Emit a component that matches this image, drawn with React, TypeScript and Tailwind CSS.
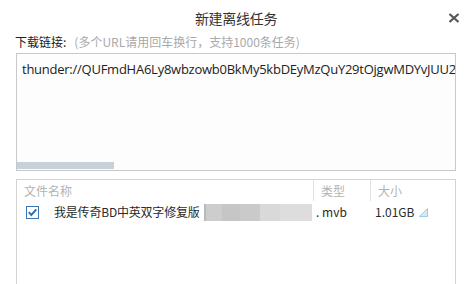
import React from "react";

const cjk = "font-['Noto_Sans_CJK_SC',sans-serif]";

function CloseIcon() {
  return (
    <svg width="12" height="10" viewBox="0 0 12 10" className="block">
      <path d="M1.5 1 L10.5 9 M10.5 1 L1.5 9" stroke="#555" strokeWidth="2.2" strokeLinecap="butt" />
    </svg>
  );
}

function Check() {
  return (
    <div className="w-[13px] h-[13px] border border-[#3a78b5] bg-white flex items-center justify-center">
      <svg width="11" height="11" viewBox="0 0 11 11" className="block">
        <path d="M1.8 5.2 L4.3 8 L9.3 2.4" stroke="#2f6fae" strokeWidth="1.9" fill="none" />
      </svg>
    </div>
  );
}

function Grip() {
  return (
    <svg width="9" height="9" viewBox="0 0 9 9" className="block">
      <path d="M0.5 8.5 L8.5 0.5 L8.5 8.5 Z" fill="#d6e9f7" stroke="#9ccbe9" strokeWidth="1" />
    </svg>
  );
}

export default function App() {
  return (
    <div className={`w-[472px] h-[284px] bg-white overflow-hidden flex flex-col ${cjk}`}>
      <div className="shrink-0 h-[34px] grid grid-cols-[1fr_auto_1fr] items-center">
        <div />
        <div className="text-[14px] text-[#333] leading-none tracking-[-0.3px] pt-[1px]">新建离线任务</div>
        <div className="flex justify-end pr-[12px] pt-[1px]">
          <CloseIcon />
        </div>
      </div>
      <div className="shrink-0 h-[16px] pl-[15px] flex items-center text-[12px] leading-none">
        <span className="text-[#222]">下载链接:</span>
        <span className="text-[#a9a9a9] ml-[8px]">(多个URL请用回车换行，支持1000条任务)</span>
      </div>
      <div className="shrink-0 mt-[3px] mx-[16px] h-[118px] border border-[#c9c9c9] bg-[#fdfdfd] flex flex-col overflow-hidden">
        <div className="flex-1 pl-[5px] pt-[7px] whitespace-nowrap overflow-hidden text-[13px] leading-[16px] text-[#222] font-['Open_Sans',sans-serif] tracking-[-0.25px]">
          thunder://QUFmdHA6Ly8wbzowb0BkMy5kbDEyMzQuY29tOjgwMDYvJUU2
        </div>
        <div className="h-[7px] w-[97px] bg-[#c6d1da] mb-[1px]" />
      </div>
      <div className="shrink-0 mt-[8px] mx-[16px] h-[120px] border border-[#d3d3d3] bg-white flex flex-col">
        <div className="h-[21px] flex text-[12px] text-[#b3b3b3] leading-none">
          <div className="flex-1 pl-[7px] flex items-center">文件名称</div>
          <div className="w-[57px] border-l border-[#e2e2e2] pl-[7px] flex items-center">类型</div>
          <div className="w-[85px] border-l border-[#e2e2e2] pl-[7px] flex items-center">大小</div>
        </div>
        <div className="h-[22px] flex items-center text-[12px] text-[#2a2a2a] leading-none">
          <div className="pl-[9px] w-[37px] flex items-center">
            <Check />
          </div>
          <div className="w-[150px] whitespace-nowrap tracking-[-0.2px]">我是传奇BD中英双字修复版</div>
          <div className="w-[108px] h-[17px] flex">
            <div className="w-[2px] bg-[#b9b9b9]" />
            <div className="w-[16px] bg-[#cdcdcd]" />
            <div className="w-[18px] bg-[#c6c6c6]" />
            <div className="w-[20px] bg-[#cacaca]" />
            <div className="w-[20px] bg-[#d9d9d9]" />
            <div className="w-[32px] bg-[#dddddd]" />
          </div>
          <div className="w-[63px] pl-[4px] whitespace-nowrap">. mvb</div>
          <div className="flex items-center gap-[5px] whitespace-nowrap">
            <span>1.01GB</span>
            <Grip />
          </div>
        </div>
      </div>
    </div>
  );
}
